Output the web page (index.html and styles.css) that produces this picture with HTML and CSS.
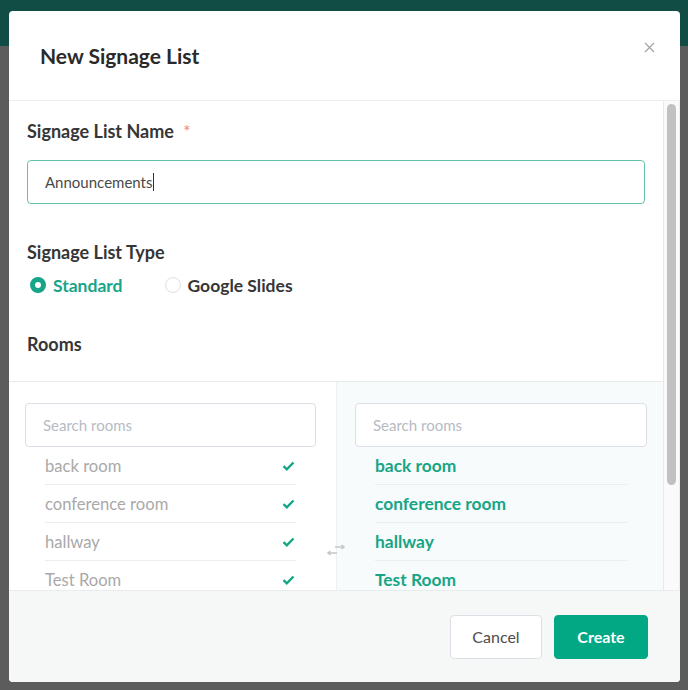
FILE: index.html
```html
<!DOCTYPE html>
<html>
<head>
<meta charset="utf-8">
<link rel="stylesheet" href="styles.css">
</head>
<body>
<div class="modal">
  <div class="modal-header">
    <h2 class="title">New Signage List</h2>
    <span class="close" aria-label="Close">
      <svg width="11" height="11" viewBox="0 0 11 11"><path d="M1 1L10 10M10 1L1 10" stroke="#a3a3a3" stroke-width="1.2" fill="none"/></svg>
    </span>
  </div>
  <div class="modal-body">
    <div class="body-content">
      <div class="form">
        <div class="label">Signage List Name <span class="req">*</span></div>
        <div class="name-input">Announcements<span class="caret"></span></div>
        <div class="label type-label">Signage List Type</div>
        <div class="radios">
          <label class="radio checked"><span class="dot"></span><span>Standard</span></label>
          <label class="radio"><span class="dot"></span><span>Google Slides</span></label>
        </div>
        <div class="label rooms-label">Rooms</div>
      </div>
      <div class="transfer">
        <div class="col col-left">
          <div class="search">Search rooms</div>
          <ul class="list">
            <li>back room <svg class="check" width="13" height="10" viewBox="0 0 13 10"><path d="M1.5 5.2L4.8 8.3L11.5 1.5" stroke="#13a584" stroke-width="2.4" fill="none"/></svg></li>
            <li>conference room <svg class="check" width="13" height="10" viewBox="0 0 13 10"><path d="M1.5 5.2L4.8 8.3L11.5 1.5" stroke="#13a584" stroke-width="2.4" fill="none"/></svg></li>
            <li>hallway <svg class="check" width="13" height="10" viewBox="0 0 13 10"><path d="M1.5 5.2L4.8 8.3L11.5 1.5" stroke="#13a584" stroke-width="2.4" fill="none"/></svg></li>
            <li>Test Room <svg class="check" width="13" height="10" viewBox="0 0 13 10"><path d="M1.5 5.2L4.8 8.3L11.5 1.5" stroke="#13a584" stroke-width="2.4" fill="none"/></svg></li>
          </ul>
        </div>
        <div class="col col-right">
          <div class="search">Search rooms</div>
          <ul class="list selected">
            <li>back room</li>
            <li>conference room</li>
            <li>hallway</li>
            <li>Test Room</li>
          </ul>
        </div>
        <span class="swap">
          <svg width="18" height="12" viewBox="0 0 18 12"><path d="M8 3H17M14.5 1L17 3L14.5 5" stroke="#c3c8c8" stroke-width="1.6" fill="none"/><path d="M10 9H1M3.5 7L1 9L3.5 11" stroke="#c3c8c8" stroke-width="1.6" fill="none"/></svg>
        </span>
      </div>
    </div>
    <div class="scrollbar"><div class="thumb"></div></div>
  </div>
  <div class="modal-footer">
    <button class="btn btn-cancel">Cancel</button>
    <button class="btn btn-create">Create</button>
  </div>
</div>
</body>
</html>
```
FILE: styles.css
```css
* { box-sizing: border-box; }
html, body { margin: 0; padding: 0; }
body {
  width: 688px;
  height: 690px;
  overflow: hidden;
  font-family: Lato, "Open Sans", sans-serif;
  background: linear-gradient(#114c45 0, #114c45 46px, #5c5c5c 46px);
  padding-top: 11px;
  padding-left: 9px;
}
.modal {
  width: 671px;
  height: 671px;
  background: #fff;
  border-radius: 4px;
  overflow: hidden;
  display: flex;
  flex-direction: column;
}
.modal-header {
  height: 90px;
  flex: none;
  border-bottom: 1px solid #eeeeee;
  display: flex;
  align-items: center;
  justify-content: space-between;
  padding: 0 25px 0 31px;
}
.title {
  margin: 0;
  font-size: 21px;
  font-weight: 700;
  color: #2a2a2a;
}
.close {
  align-self: flex-start;
  margin-top: 31px;
  display: flex;
}
.modal-body {
  flex: 1;
  min-height: 0;
  display: flex;
  overflow: hidden;
}
.body-content {
  flex: 1;
  min-width: 0;
  overflow: hidden;
}
.scrollbar {
  flex: none;
  width: 17px;
  background: #fafafa;
  border-left: 1px solid #e9e9e9;
  border-right: 1px solid #ededed;
  padding: 3px 3px 0 3px;
}
.thumb {
  width: 9px;
  height: 381px;
  border-radius: 5px;
  background: #c1c1c1;
}
.form {
  padding: 18px 18px 0 18px;
}
.label {
  font-size: 18px;
  font-weight: 700;
  color: #363636;
  line-height: 24px;
}
.req { color: #e88585; margin-left: 5px; font-weight: 400; font-size: 17px; }
.name-input {
  margin-top: 16px;
  height: 44px;
  border: 1px solid #62c2a9;
  border-radius: 4px;
  padding: 0 17px;
  display: flex;
  align-items: center;
  font-size: 15px;
  color: #4a4a4a;
}
.caret {
  display: inline-block;
  width: 1px;
  height: 18px;
  background: #333;
  margin-left: 1px;
}
.type-label { margin-top: 36px; }
.radios {
  display: flex;
  align-items: center;
  margin-top: 9px;
  margin-left: 3px;
  height: 24px;
}
.radio {
  display: flex;
  align-items: center;
  gap: 7px;
  font-size: 17.5px;
  font-weight: 700;
  color: #363636;
  margin-right: 42px;
}
.radio .dot {
  width: 16px;
  height: 16px;
  border-radius: 50%;
  border: 1px solid #dcdfe6;
  background: #fff;
}
.radio.checked { color: #17a587; }
.radio.checked .dot {
  border: 5px solid #17a587;
  background: #fff;
}
.rooms-label { margin-top: 35px; }
.transfer {
  margin-top: 25px;
  border-top: 1px solid #e6eaea;
  display: grid;
  grid-template-columns: 328px 1fr;
  position: relative;
}
.col { padding: 21px 20px 130px 16px; }
.col-left { border-right: 1px solid #eef1f1; }
.col-right { background: #f7fbfb; padding: 21px 16px 130px 18px; }
.search {
  height: 44px;
  border: 1px solid #dcdfe6;
  border-radius: 4px;
  background: #fff;
  display: flex;
  align-items: center;
  padding: 0 17px;
  font-size: 15px;
  color: #b6bbc4;
}
.list {
  list-style: none;
  margin: 0 20px;
  padding: 0;
}
.list li {
  height: 38px;
  border-bottom: 1px solid #eceeee;
  display: flex;
  align-items: center;
  justify-content: space-between;
  font-size: 16.6px;
  color: #a9a9a9;
}
.list .check { margin-right: 1px; }
.list.selected li {
  color: #17a587;
  font-weight: 700;
  font-size: 17.4px;
}
.swap {
  position: absolute;
  left: 318px;
  top: 162px;
  width: 18px;
  height: 12px;
  display: flex;
}
.modal-footer {
  flex: none;
  height: 92px;
  border-top: 1px solid #e8ecec;
  background: #f6f8f8;
  display: flex;
  justify-content: flex-end;
  align-items: center;
  gap: 12px;
  padding-right: 32px;
}
.btn {
  height: 44px;
  border-radius: 4px;
  font-family: inherit;
  font-size: 16px;
  cursor: pointer;
}
.btn-cancel {
  width: 92px;
  background: #fff;
  border: 1px solid #dcdfe6;
  color: #4d4d4d;
}
.btn-create {
  width: 94px;
  background: #02a884;
  border: 1px solid #02a884;
  color: #fff;
  font-weight: 700;
}
```
